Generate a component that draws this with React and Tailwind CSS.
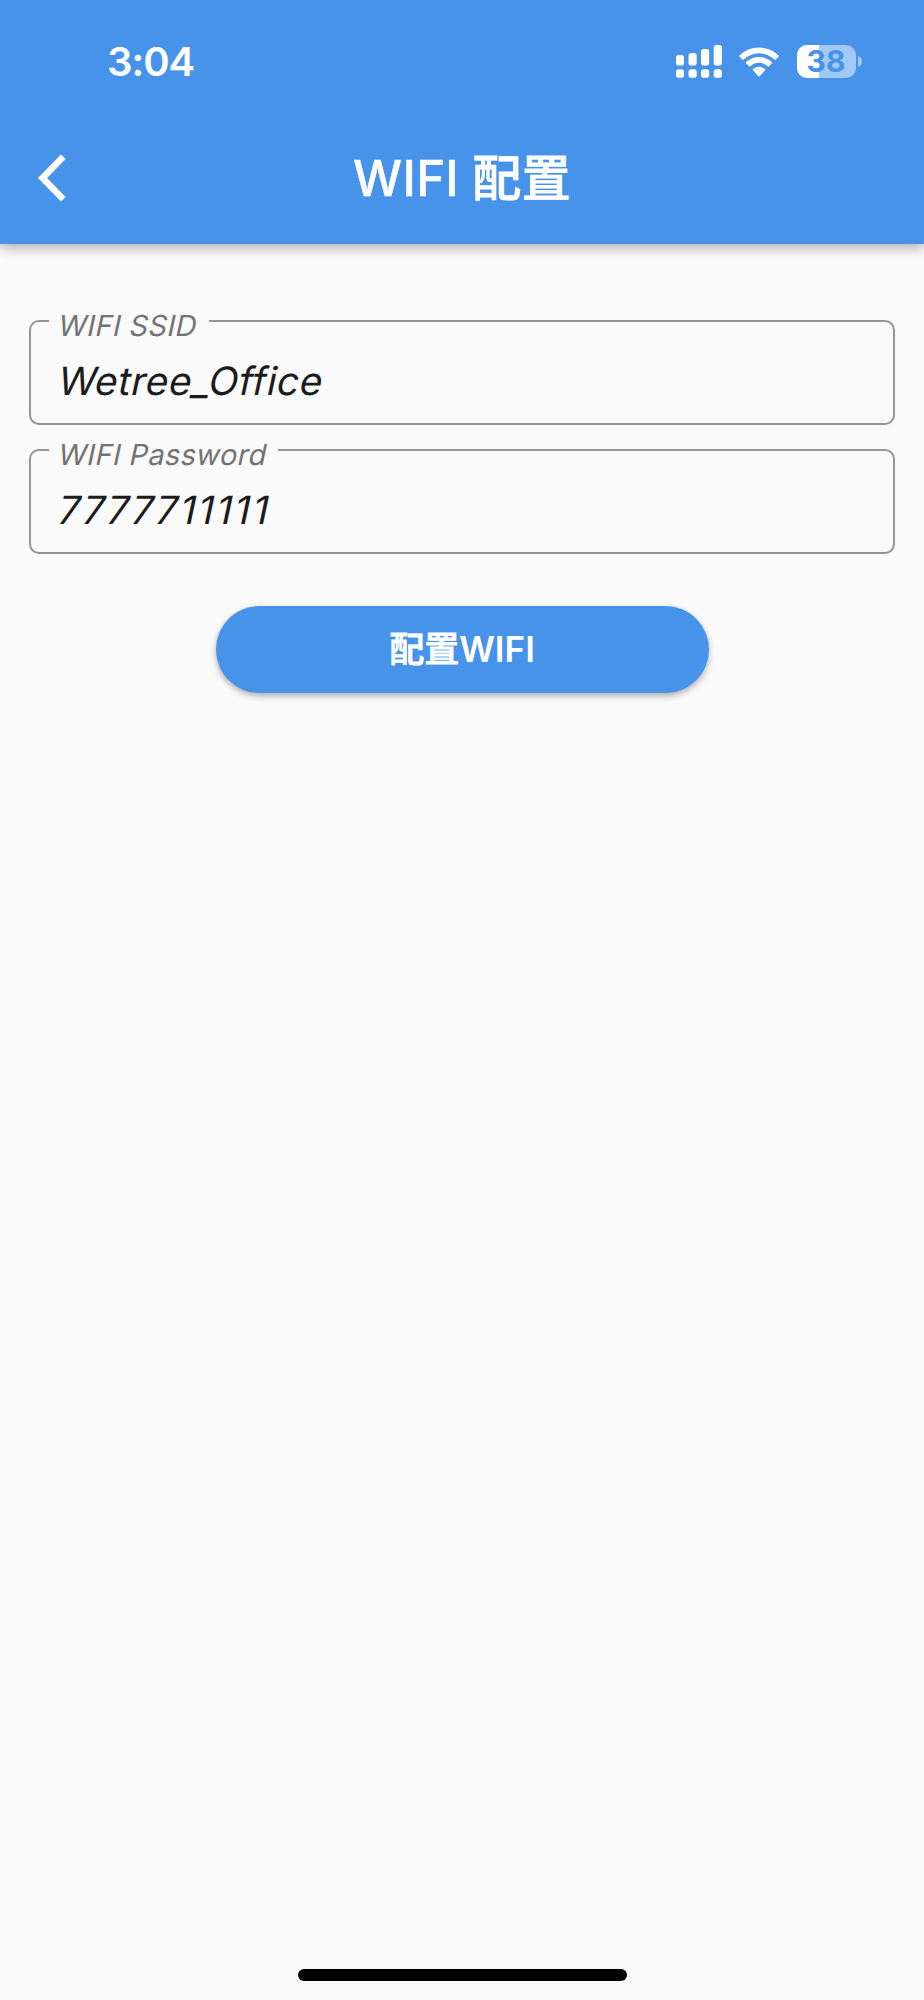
import React, { useState } from 'react';

function SignalIcon() {
  return (
    <svg width="46" height="33" viewBox="0 0 46 33" fill="white">
      <rect x="0" y="10" width="8" height="10.5" rx="2.8" />
      <rect x="12.5" y="8" width="8.2" height="12.5" rx="2.8" />
      <rect x="25" y="4" width="8.2" height="16.5" rx="2.8" />
      <rect x="37.7" y="0" width="8.2" height="20.5" rx="2.8" />
      <rect x="0" y="24.3" width="8" height="8.4" rx="2.8" />
      <rect x="12.5" y="24.3" width="8.2" height="8.4" rx="2.8" />
      <rect x="25" y="24.3" width="8.2" height="8.4" rx="2.8" />
      <rect x="37.7" y="24.3" width="8.2" height="8.4" rx="2.8" />
    </svg>
  );
}

function WifiIcon() {
  return (
    <svg width="40" height="30" viewBox="0 0 40 30" fill="white">
      <path d="M.5 8.4A28.2 28.2 0 0 1 39.5 8.4Q40.1 9 39.5 9.7L36.7 12.5Q36 13.1 35.4 12.5A22.3 22.3 0 0 0 4.6 12.5Q4 13.1 3.3 12.5L.5 9.7Q-.1 9 .5 8.4Z" />
      <path d="M7.2 15.1A18.7 18.7 0 0 1 32.8 15.1Q33.4 15.8 32.8 16.4L29.9 19.2Q29.3 19.7 28.6 19.2A12.6 12.6 0 0 0 11.4 19.2Q10.7 19.7 10.1 19.2L7.2 16.4Q6.6 15.8 7.2 15.1Z" />
      <path d="M14 21.9A9.2 9.2 0 0 1 26 21.9Q26.7 22.5 26 23.2L20.7 29.2Q20 29.9 19.3 29.2L14 23.2Q13.3 22.5 14 21.9Z" />
    </svg>
  );
}

function Battery({ level }) {
  return (
    <div className="flex items-center gap-[2px]">
      <div className="relative h-[33px] w-[59px] rounded-[10px] bg-[#a1c9f4]">
        <div className="h-full rounded-l-[10px] bg-white" style={{ width: `${level}%` }} />
        <span className="absolute -left-[1px] right-0 -top-[2px] text-center text-[30px] leading-[37px] font-bold text-[#4893ea]">
          {level}
        </span>
      </div>
      <svg width="4" height="11" viewBox="0 0 4 11" fill="#a1c9f4">
        <path d="M0 0Q4 1.5 4 5.5T0 11Z" />
      </svg>
    </div>
  );
}

function StatusBar() {
  return (
    <div className="flex h-[123px] items-center justify-between pl-[107px] pr-[62px]">
      <span className="text-[40px] leading-none font-semibold tracking-[-1px]">3:04</span>
      <div className="flex items-center gap-[18px]">
        <div className="flex items-center gap-[17px]">
          <SignalIcon />
          <WifiIcon />
        </div>
        <Battery level={38} />
      </div>
    </div>
  );
}

function TextField({ label, value, onChange, inputClass }) {
  return (
    <label className="relative flex h-[105px] items-center rounded-[10px] border-2 border-[#949494] px-7">
      <span className="absolute left-[18px] -top-[14px] bg-[#fafafa] pl-[10px] pr-[11px] text-[29px] leading-[36px] whitespace-nowrap text-[#737373]">
        <span className="inline-block -skew-x-12 font-[370] tracking-[0.35px]">{label}</span>
      </span>
      <input
        value={value}
        onChange={(e) => onChange(e.target.value)}
        className={`mt-[17px] w-full -skew-x-12 bg-transparent text-[39px] leading-[48px] font-[370] text-[#1c1c1c] outline-none ${inputClass}`}
      />
    </label>
  );
}

export default function App() {
  const [ssid, setSsid] = useState('Wetree_Office');
  const [password, setPassword] = useState('7777711111');

  return (
    <div className="flex h-[2000px] w-[924px] flex-col bg-[#fafafa] font-['Inter','Noto_Sans_CJK_SC',sans-serif]">
      <header className="h-[244px] bg-[#4893ea] text-white shadow-[0_4px_12px_rgba(0,0,0,0.3)]">
        <StatusBar />
        <div className="grid h-[110px] grid-cols-[1fr_auto_1fr] items-center">
          <button className="justify-self-start pl-[38px]">
            <svg width="28" height="48" viewBox="0 0 28 48" fill="none" stroke="white" strokeWidth="6.6">
              <path d="M25.3 2.7L4.5 24l20.8 21.3" />
            </svg>
          </button>
          <h1 className="text-[49px] leading-none font-medium tracking-[0.3px] [-webkit-text-stroke:0.4px_white]">
            WIFI <span className="[-webkit-text-stroke:0.8px_white]">配置</span>
          </h1>
        </div>
      </header>

      <main className="flex flex-1 flex-col px-[29px] pt-[76px]">
        <div className="flex flex-col gap-6">
          <TextField label="WIFI SSID" value={ssid} onChange={setSsid} inputClass="tracking-[0.4px]" />
          <TextField
            label="WIFI Password"
            value={password}
            onChange={setPassword}
            inputClass="tracking-[2.3px] [font-kerning:none]"
          />
        </div>
        <button className="mt-[52px] h-[87px] w-[493px] self-center rounded-full bg-[#4893ea] text-[35px] leading-none font-semibold text-white shadow-[0_3px_6px_rgba(0,0,0,0.3)]">
          <span className="font-medium [-webkit-text-stroke:0.9px_white]">配置</span>WIFI
        </button>
      </main>

      <div className="mb-[19px] h-3 w-[329px] self-center rounded-full bg-black" />
    </div>
  );
}
